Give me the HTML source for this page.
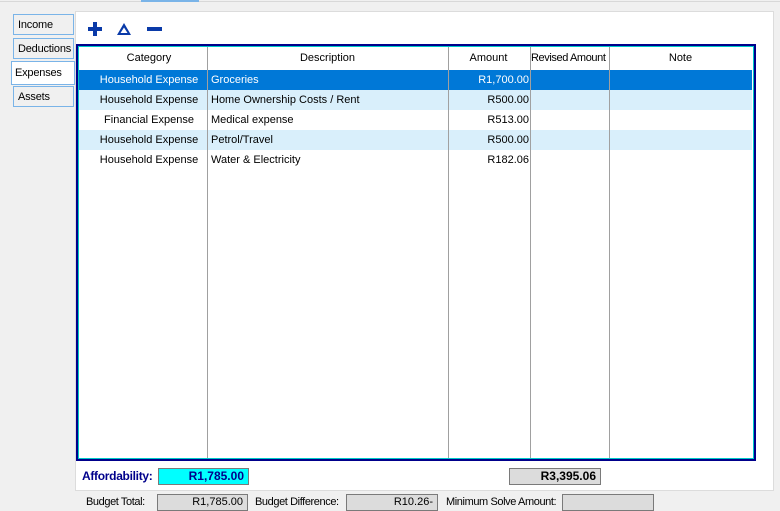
<!DOCTYPE html>
<html><head><style>
*{margin:0;padding:0;box-sizing:border-box}
body{width:780px;height:511px;background:#f0f0f0;font-family:"Liberation Sans",sans-serif;font-size:11px;color:#000;position:relative;overflow:hidden}
.a{position:absolute}
.tab{position:absolute;left:13px;width:61px;height:21px;background:#f0f0f0;border:1px solid #7ab4e8;padding:4px 0 0 4px;font-size:11px;letter-spacing:-0.2px}
.row{position:absolute;left:79px;width:673px;height:20px;line-height:21px;font-size:11px}
.row span{position:absolute;top:0}
.c1{left:6px;width:128px;text-align:center}
.c2{left:132px}
.c3{left:369px;width:81px;text-align:right}
.vl{position:absolute;top:47px;width:1px;height:411px;background:#a0a0a0}
.box{position:absolute;height:17px;border:1px solid #7a7a7a;background:#dcdcdc;text-align:right;padding-right:4px;line-height:15px;font-size:11px}
.lb{position:absolute;letter-spacing:-0.4px;top:496px}
</style></head><body>
<div class="a" style="left:0;top:1px;width:780px;height:1px;background:#d8d8d8"></div>
<div class="a" style="left:141px;top:0;width:58px;height:2px;background:#7ab4e8"></div>
<div class="a" style="left:75px;top:11px;width:699px;height:480px;background:#fff;border:1px solid #dcdcdc"></div>
<div class="tab" style="top:14px">Income</div>
<div class="tab" style="top:38px">Deductions</div>
<div class="tab" style="top:61px;left:11px;width:64px;height:24px;background:#fff;padding-left:3px;padding-top:5px">Expenses</div>
<div class="tab" style="top:86px">Assets</div>
<svg class="a" style="left:86px;top:20px" width="80" height="18">
<path d="M7 2h4v5h5v4h-5v5H7v-5H2V7h5z" fill="#0a3aa8"/>
<path d="M38 3L31 15h14z M38 7.5L34.5 13h7z" fill="#0a3aa8" fill-rule="evenodd"/>
<rect x="61" y="7" width="15" height="4" fill="#0a3aa8"/>
</svg>
<div class="a" style="left:76px;top:44px;width:680px;height:417px;border:2px solid #00008b"></div>
<div class="a" style="left:78px;top:46px;width:676px;height:413px;border:1px solid #00c8c8;background:#fff"></div>
<div class="row" style="top:47px;height:23px;line-height:23px"><span class="c1">Category</span><span style="left:128px;width:241px;text-align:center">Description</span><span style="left:369px;width:81px;text-align:center">Amount</span><span style="left:452px;letter-spacing:-0.4px;width:78px;overflow:hidden;white-space:nowrap">Revised Amount</span><span style="left:530px;width:143px;text-align:center">Note</span></div>
<div class="row" style="top:70px;background:#0078d7;color:#fff"><span class="c1">Household Expense</span><span class="c2">Groceries</span><span class="c3">R1,700.00</span></div>
<div class="row" style="top:90px;background:#d9effb"><span class="c1">Household Expense</span><span class="c2">Home Ownership Costs / Rent</span><span class="c3">R500.00</span></div>
<div class="row" style="top:110px"><span class="c1">Financial Expense</span><span class="c2">Medical expense</span><span class="c3">R513.00</span></div>
<div class="row" style="top:130px;background:#d9effb"><span class="c1">Household Expense</span><span class="c2">Petrol/Travel</span><span class="c3">R500.00</span></div>
<div class="row" style="top:150px"><span class="c1">Household Expense</span><span class="c2">Water &amp; Electricity</span><span class="c3">R182.06</span></div>
<div class="vl" style="left:207px"></div><div class="vl" style="left:448px"></div><div class="vl" style="left:530px"></div><div class="vl" style="left:609px"></div>
<div class="a" style="left:82px;top:469px;font-weight:bold;color:#00008b;font-size:12px;letter-spacing:-0.3px">Affordability:</div>
<div class="box" style="left:158px;top:468px;width:91px;background:#00ffff;color:#00008b;font-weight:bold;font-size:12px">R1,785.00</div>
<div class="box" style="left:509px;top:468px;width:92px;font-weight:bold;font-size:12px">R3,395.06</div>
<div class="lb" style="left:86px">Budget Total:</div>
<div class="box" style="left:157px;top:494px;width:91px">R1,785.00</div>
<div class="lb" style="left:255px">Budget Difference:</div>
<div class="box" style="left:346px;top:494px;width:92px">R10.26-</div>
<div class="lb" style="left:446px">Minimum Solve Amount:</div>
<div class="box" style="left:562px;top:494px;width:92px"></div>
</body></html>
